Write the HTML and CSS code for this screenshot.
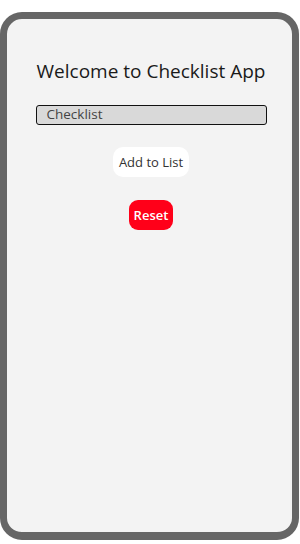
FILE: index.html
```html
<!DOCTYPE html>
<html>
<head>
<meta charset="utf-8">
<link rel="stylesheet" href="styles.css">
</head>
<body>
<div class="phone">
  <h1 class="title">Welcome to Checklist App</h1>
  <div class="input">Checklist</div>
  <button class="add">Add to List</button>
  <button class="reset">Reset</button>
</div>
</body>
</html>
```
FILE: styles.css
```css
html, body {
  margin: 0;
  padding: 0;
  background: #ffffff;
}
body {
  padding-top: 12px;
  font-family: "Open Sans", "Noto Sans", sans-serif;
}
.phone {
  box-sizing: border-box;
  width: 299px;
  height: 528px;
  border: 7px solid #666666;
  border-bottom-width: 8px;
  border-radius: 22px;
  background: #f3f3f3;
  display: flex;
  flex-direction: column;
  align-items: center;
  padding-left: 3px;
}
.title {
  margin: 40px 0 0;
  font-weight: 400;
  font-size: 19px;
  color: #1a1a1a;
  line-height: 24px;
}
.input {
  box-sizing: border-box;
  margin-top: 22px;
  width: 231px;
  height: 20px;
  border: 1.5px solid #111;
  border-radius: 3px;
  background: #d9d9d9;
  color: #444;
  font-size: 13.5px;
  line-height: 17px;
  padding-left: 10px;
}
.add {
  margin-top: 22px;
  border: none;
  background: #ffffff;
  border-radius: 10px;
  height: 30px;
  padding: 0 6px;
  font-family: "Open Sans", sans-serif;
  font-size: 13px;
  color: #333;
}
.reset {
  margin-top: 23px;
  border: none;
  background: #ff0019;
  border-radius: 9px;
  height: 30px;
  padding: 0 4.5px;
  font-family: "Open Sans", sans-serif;
  font-size: 13px;
  font-weight: 600;
  color: #ffffff;
}
```
